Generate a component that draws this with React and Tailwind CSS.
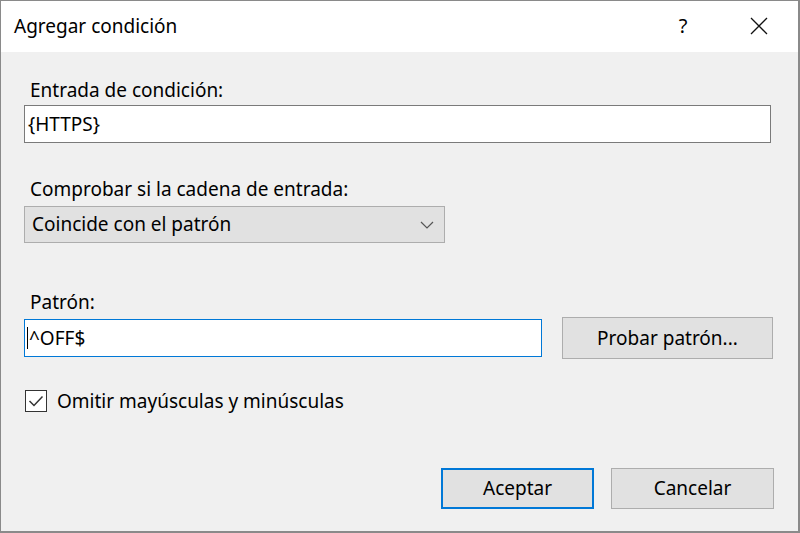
export default function App() {
    return (
        <div
            className="w-[800px] h-[533px] flex flex-col border border-[#8a8a8a] border-r-[2px] border-b-[2px] bg-[#f0f0f0] text-[#000] overflow-hidden"
            style={{ fontFamily: '"Noto Sans", "Open Sans", sans-serif' }}
        >
            {/* Title bar */}
            <div className="h-[51px] shrink-0 bg-white flex items-center pl-[13px] pr-[30px]">
                <span className="text-[19px] leading-[24px] flex-1 -mt-[2px]">Agregar condición</span>
                <span className="text-[20px] leading-[24px] w-[12px] text-center mr-[61px] -mt-[2px]">?</span>
                <svg width="18" height="18" viewBox="0 0 18 18" className="-mt-[1px]">
                    <path d="M1 1 L17 17 M17 1 L1 17" stroke="#111" strokeWidth="1.3" fill="none" />
                </svg>
            </div>

            {/* Body */}
            <div className="flex-1 flex flex-col px-[23px] text-[19px]">
                <div className="mt-[26px] h-[24px] leading-[24px] pl-[6px]">Entrada de condición:</div>
                <div className="mt-[3px] w-[747px] h-[38px] bg-white border border-[#7a7a7a] flex items-center pl-[3px]">
                    {'{HTTPS}'}
                </div>

                <div className="mt-[34px] h-[24px] leading-[24px] pl-[6px]">Comprobar si la cadena de entrada:</div>
                <div className="mt-[5px] w-[421px] h-[37px] bg-[#e1e1e1] border border-[#adadad] flex items-center pl-[7px] pr-[10px]">
                    <span className="flex-1">Coincide con el patrón</span>
                    <svg width="14" height="8" viewBox="0 0 14 8">
                        <path d="M1 1 L7 7 L13 1" stroke="#555" strokeWidth="1.2" fill="none" />
                    </svg>
                </div>

                <div className="mt-[47px] h-[24px] leading-[24px] pl-[6px]">Patrón:</div>
                <div className="mt-[3px] flex items-center gap-[20px]">
                    <div className="w-[518px] h-[38px] bg-white border border-[#0078d7] flex items-center pl-[2px]">
                        <span className="w-[1px] h-[22px] bg-black mr-[1px]"></span>
                        <span>^OFF$</span>
                    </div>
                    <div className="w-[211px] h-[42px] bg-[#e1e1e1] border border-[#adadad] flex items-center justify-center">
                        Probar patrón...
                    </div>
                </div>

                <div className="mt-[28px] flex items-center gap-[10px] pl-[1px]">
                    <div className="w-[22px] h-[22px] border border-[#333] bg-white flex items-center justify-center">
                        <svg width="16" height="12" viewBox="0 0 16 12">
                            <path d="M1.5 6 L6 10.5 L14.5 1.5" stroke="#333" strokeWidth="1.5" fill="none" />
                        </svg>
                    </div>
                    <span>Omitir mayúsculas y minúsculas</span>
                </div>

                <div className="mt-auto mb-[22px] flex justify-end gap-[17px] pr-[1px]">
                    <div className="w-[153px] h-[41px] bg-[#e1e1e1] border-2 border-[#0078d7] flex items-center justify-center">
                        Aceptar
                    </div>
                    <div className="w-[163px] h-[41px] bg-[#e1e1e1] border border-[#adadad] flex items-center justify-center">
                        Cancelar
                    </div>
                </div>
            </div>
        </div>
    );
}
